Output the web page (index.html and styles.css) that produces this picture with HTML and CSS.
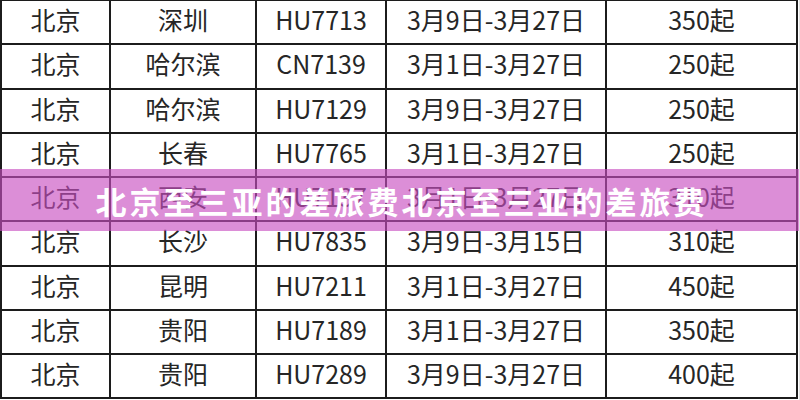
FILE: index.html
```html
<!DOCTYPE html>
<html lang="zh-CN">
<head>
<meta charset="utf-8">
<title>北京至三亚的差旅费</title>
<link rel="stylesheet" href="styles.css">
</head>
<body>
<div class="page">
  <table class="fares">
    <colgroup>
      <col class="c1"><col class="c2"><col class="c3"><col class="c4"><col class="c5">
    </colgroup>
    <tbody>
      <tr><td>北京</td><td>深圳</td><td>HU7713</td><td>3月9日-3月27日</td><td>350起</td></tr>
      <tr><td>北京</td><td>哈尔滨</td><td>CN7139</td><td>3月1日-3月27日</td><td>250起</td></tr>
      <tr><td>北京</td><td>哈尔滨</td><td>HU7129</td><td>3月9日-3月27日</td><td>250起</td></tr>
      <tr><td>北京</td><td>长春</td><td>HU7765</td><td>3月1日-3月27日</td><td>250起</td></tr>
      <tr><td>北京</td><td>西安</td><td>HU7137</td><td>3月1日-3月27日</td><td>310起</td></tr>
      <tr><td>北京</td><td>长沙</td><td>HU7835</td><td>3月9日-3月15日</td><td>310起</td></tr>
      <tr><td>北京</td><td>昆明</td><td>HU7211</td><td>3月1日-3月27日</td><td>450起</td></tr>
      <tr><td>北京</td><td>贵阳</td><td>HU7189</td><td>3月1日-3月27日</td><td>350起</td></tr>
      <tr><td>北京</td><td>贵阳</td><td>HU7289</td><td>3月9日-3月27日</td><td>400起</td></tr>
    </tbody>
  </table>
  <div class="banner"><span class="banner-text">北京至三亚的差旅费北京至三亚的差旅费</span></div>
</div>
</body>
</html>
```

FILE: styles.css
```css
html, body {
  margin: 0;
  padding: 0;
  background: #ffffff;
}

.page {
  position: relative;
  width: 800px;
  height: 400px;
  overflow: hidden;
  background: #ffffff;
  border-right: 1px solid #e4e4e4;
  box-sizing: border-box;
}

.fares {
  border-collapse: collapse;
  table-layout: fixed;
  width: 796px;
  margin-top: -1px;
  font-family: "Noto Sans CJK SC", "Noto Sans", sans-serif;
  font-size: 25px;
  color: #262626;
}

.c1 { width: 109px; }
.c2 { width: 146px; }
.c3 { width: 130px; }
.c4 { width: 220px; }
.c5 { width: 191px; }

.fares tr {
  height: 44.25px;
}

.fares td {
  border: 2px solid #1c1c1c;
  padding: 0 0 5px 0;
  text-align: center;
  vertical-align: middle;
  line-height: 1;
  white-space: nowrap;
}

.banner {
  position: absolute;
  left: 0;
  top: 169px;
  width: 800px;
  height: 62px;
  background: rgba(200, 78, 192, 0.64);
  display: flex;
  align-items: center;
  justify-content: center;
}

.banner-text {
  font-family: "Noto Sans CJK SC", "Noto Sans", sans-serif;
  font-weight: 700;
  font-size: 31px;
  letter-spacing: 3px;
  color: #ffffff;
  line-height: 1;
  padding-left: 3px;
}
```
